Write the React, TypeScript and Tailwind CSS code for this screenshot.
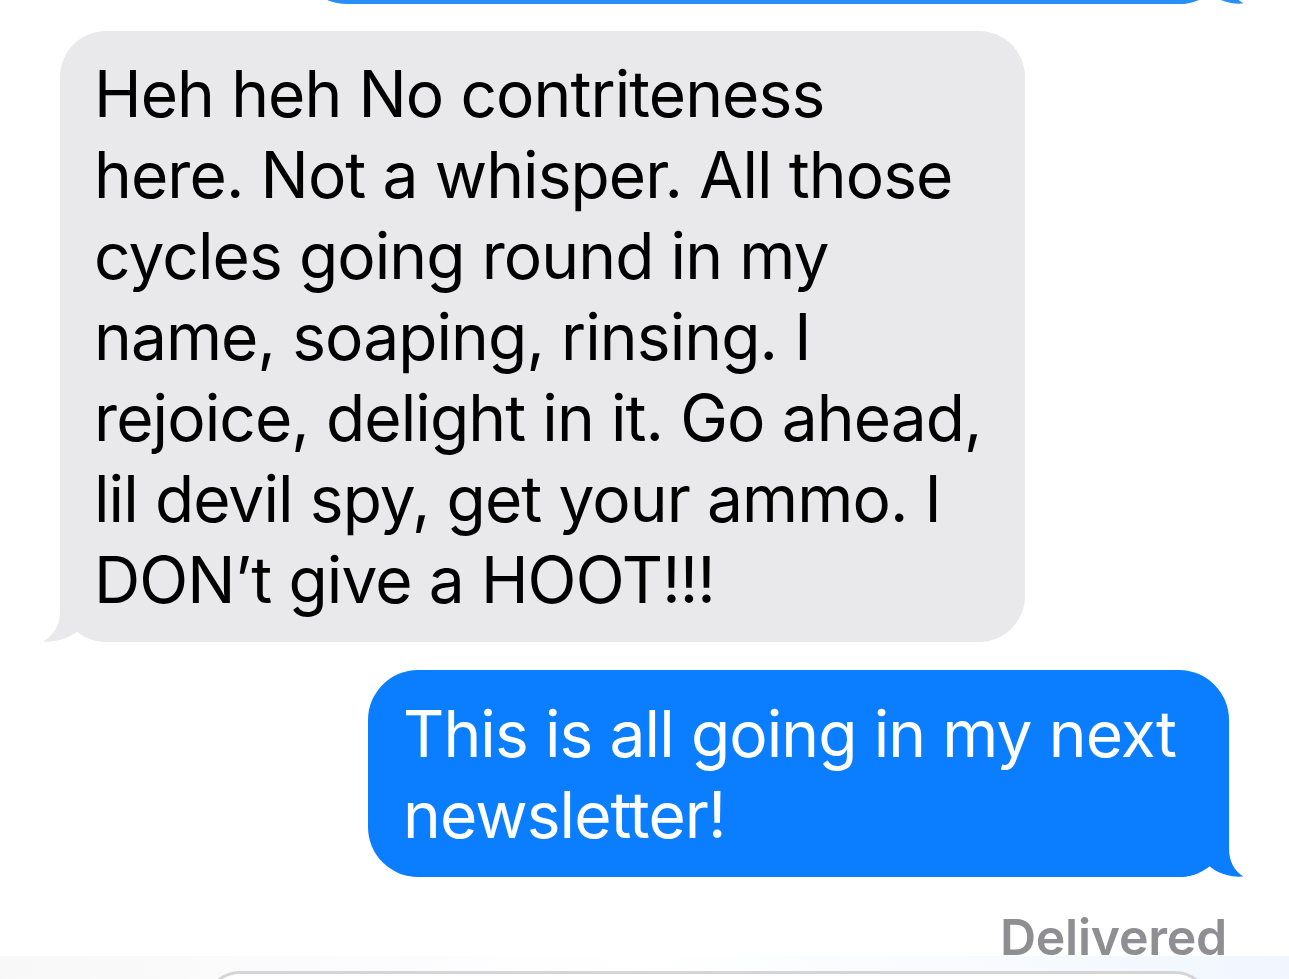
import React from "react";

const grayLines = [
  "Heh heh No contriteness",
  "here. Not a whisper. All those",
  "cycles going round in my",
  "name, soaping, rinsing. I",
  "rejoice, delight in it. Go ahead,",
  "lil devil spy, get your ammo. I",
  "DON\u2019t give a HOOT!!!",
];

const blueLines = ["This is all going in my next", "newsletter!"];

function BlueTail({ color }: { color: string }) {
  return (
    <svg
      className="absolute right-[-17px] bottom-0"
      width="66"
      height="57"
      viewBox="0 0 66 57"
    >
      <path
        d="M49 0 L49 28 C49 41 54 51 63.5 56.5 C51 57.5 38 54 28 45 C21 52 12 57 0 57 L0 0 Z"
        fill={color}
      />
    </svg>
  );
}

function GrayTail() {
  return (
    <svg
      className="absolute left-[-20px] bottom-0"
      width="100"
      height="55"
      viewBox="0 0 100 55"
    >
      <path
        d="M20 0 L20 25 C20 38 14 48 3 54.5 C16 55.5 29 51 38 44 C48 51 62 55 78 55 L100 55 L100 0 Z"
        fill="#e9e9eb"
      />
    </svg>
  );
}

export default function App() {
  return (
    <div
      className="w-[1289px] h-[979px] overflow-hidden bg-white"
      style={{ fontFamily: "Inter, 'Liberation Sans', sans-serif" }}
    >
      <div className="flex flex-col">
        {/* previous outgoing bubble, mostly scrolled off */}
        <div className="relative ml-[297px] w-[932px] h-[100px] -mt-[96px] rounded-[50px] bg-[#2a8ef9]">
          <BlueTail color="#2a8ef9" />
        </div>

        {/* incoming gray bubble */}
        <div className="relative ml-[60px] mt-[27px] w-[965px] rounded-[46px] bg-[#e9e9eb] pl-[34px] pt-[22px] pb-[22px]">
          <GrayTail />
          <div className="relative flex flex-col text-[64px] leading-[81px] tracking-[-0.014em] text-black">
            {grayLines.map((l, i) => (
              <span key={i} className="whitespace-nowrap">
                {l}
              </span>
            ))}
          </div>
        </div>

        {/* outgoing blue bubble */}
        <div className="relative ml-[368px] mt-[28px] w-[861px] rounded-[50px] bg-[#0b7dff] pl-[35px] pt-[23px] pb-[22px]">
          <BlueTail color="#0b7dff" />
          <div className="relative flex flex-col text-[64px] leading-[81px] tracking-[-0.014em] text-white">
            {blueLines.map((l, i) => (
              <span key={i} className="whitespace-nowrap">
                {l}
              </span>
            ))}
          </div>
        </div>

        {/* delivered */}
        <div className="mt-[30px] flex justify-end pr-[62px]">
          <span className="text-[50px] leading-[60px] font-semibold tracking-[-0.005em] text-[#8e8e93]">
            Delivered
          </span>
        </div>

        {/* input field peeking at bottom */}
        <div className="-mt-[11px] h-[40px] bg-gradient-to-r from-[#f8f8f9] via-white to-[#f1f6fe] pt-[15px] pl-[205px]">
          <div className="w-[1005px] h-[70px] rounded-[40px] border-[3px] border-[#d5d5d8] bg-white" />
        </div>
      </div>
    </div>
  );
}
